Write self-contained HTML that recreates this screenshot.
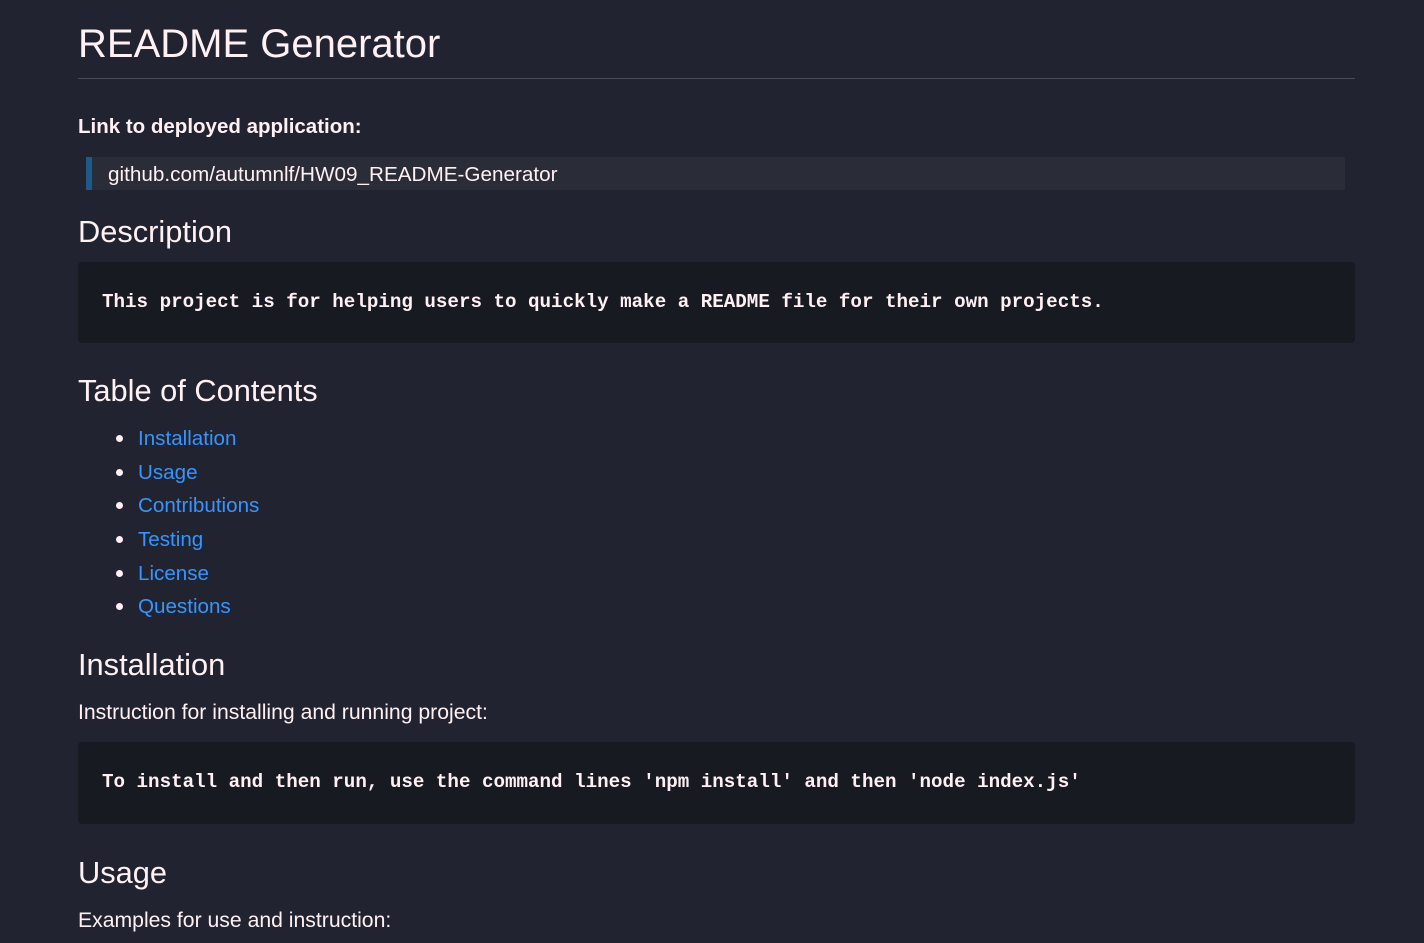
<!DOCTYPE html>
<html><head><meta charset="utf-8"><style>
html,body{margin:0;padding:0;width:1424px;height:943px;overflow:hidden;background:#212430;color:#fff0f3;font-family:"Liberation Sans",sans-serif;}
.a{position:absolute;white-space:nowrap;line-height:1;}
.h2{font-size:30.8px;}
.code{position:absolute;left:78px;width:1277px;background:#181a21;border-radius:4px;}
.mono{font-family:"Liberation Mono",monospace;font-size:19.2px;font-weight:bold;}
.li{font-size:20.6px;color:#3794ff;left:138px;}
.dot{position:absolute;left:116px;width:7px;height:7px;border-radius:50%;background:#fff0f3;}
</style></head><body>
<div class="a" style="left:78px;top:24px;font-size:40px;">README Generator</div>
<div style="position:absolute;left:78px;top:78px;width:1277px;height:1px;background:#4a4c55;"></div>
<div class="a" style="left:78px;top:117px;font-size:20.5px;font-weight:bold;">Link to deployed application:</div>
<div style="position:absolute;left:86px;top:157px;width:1259px;height:33px;background:#2a2c38;"></div>
<div style="position:absolute;left:86px;top:157px;width:6px;height:33px;background:#1c5a8c;"></div>
<div class="a" style="left:108px;top:165px;font-size:20.7px;">github.com/autumnlf/HW09_README-Generator</div>
<div class="a h2" style="left:78px;top:217px;">Description</div>
<div class="code" style="top:262px;height:81px;"></div>
<div class="a mono" style="left:102px;top:293px;">This project is for helping users to quickly make a README file for their own projects.</div>
<div class="a h2" style="left:78px;top:376px;">Table of Contents</div>
<div class="dot" style="top:435px"></div><div class="a li" style="top:429px">Installation</div>
<div class="dot" style="top:469px"></div><div class="a li" style="top:463px">Usage</div>
<div class="dot" style="top:502px"></div><div class="a li" style="top:496px">Contributions</div>
<div class="dot" style="top:536px"></div><div class="a li" style="top:530px">Testing</div>
<div class="dot" style="top:570px"></div><div class="a li" style="top:564px">License</div>
<div class="dot" style="top:603px"></div><div class="a li" style="top:597px">Questions</div>
<div class="a h2" style="left:78px;top:650px;">Installation</div>
<div class="a" style="left:78px;top:702px;font-size:21.2px;">Instruction for installing and running project:</div>
<div class="code" style="top:742px;height:82px;"></div>
<div class="a mono" style="left:102px;top:773px;">To install and then run, use the command lines 'npm install' and then 'node index.js'</div>
<div class="a h2" style="left:78px;top:858px;">Usage</div>
<div class="a" style="left:78px;top:910px;font-size:21.2px;">Examples for use and instruction:</div>
</body></html>
